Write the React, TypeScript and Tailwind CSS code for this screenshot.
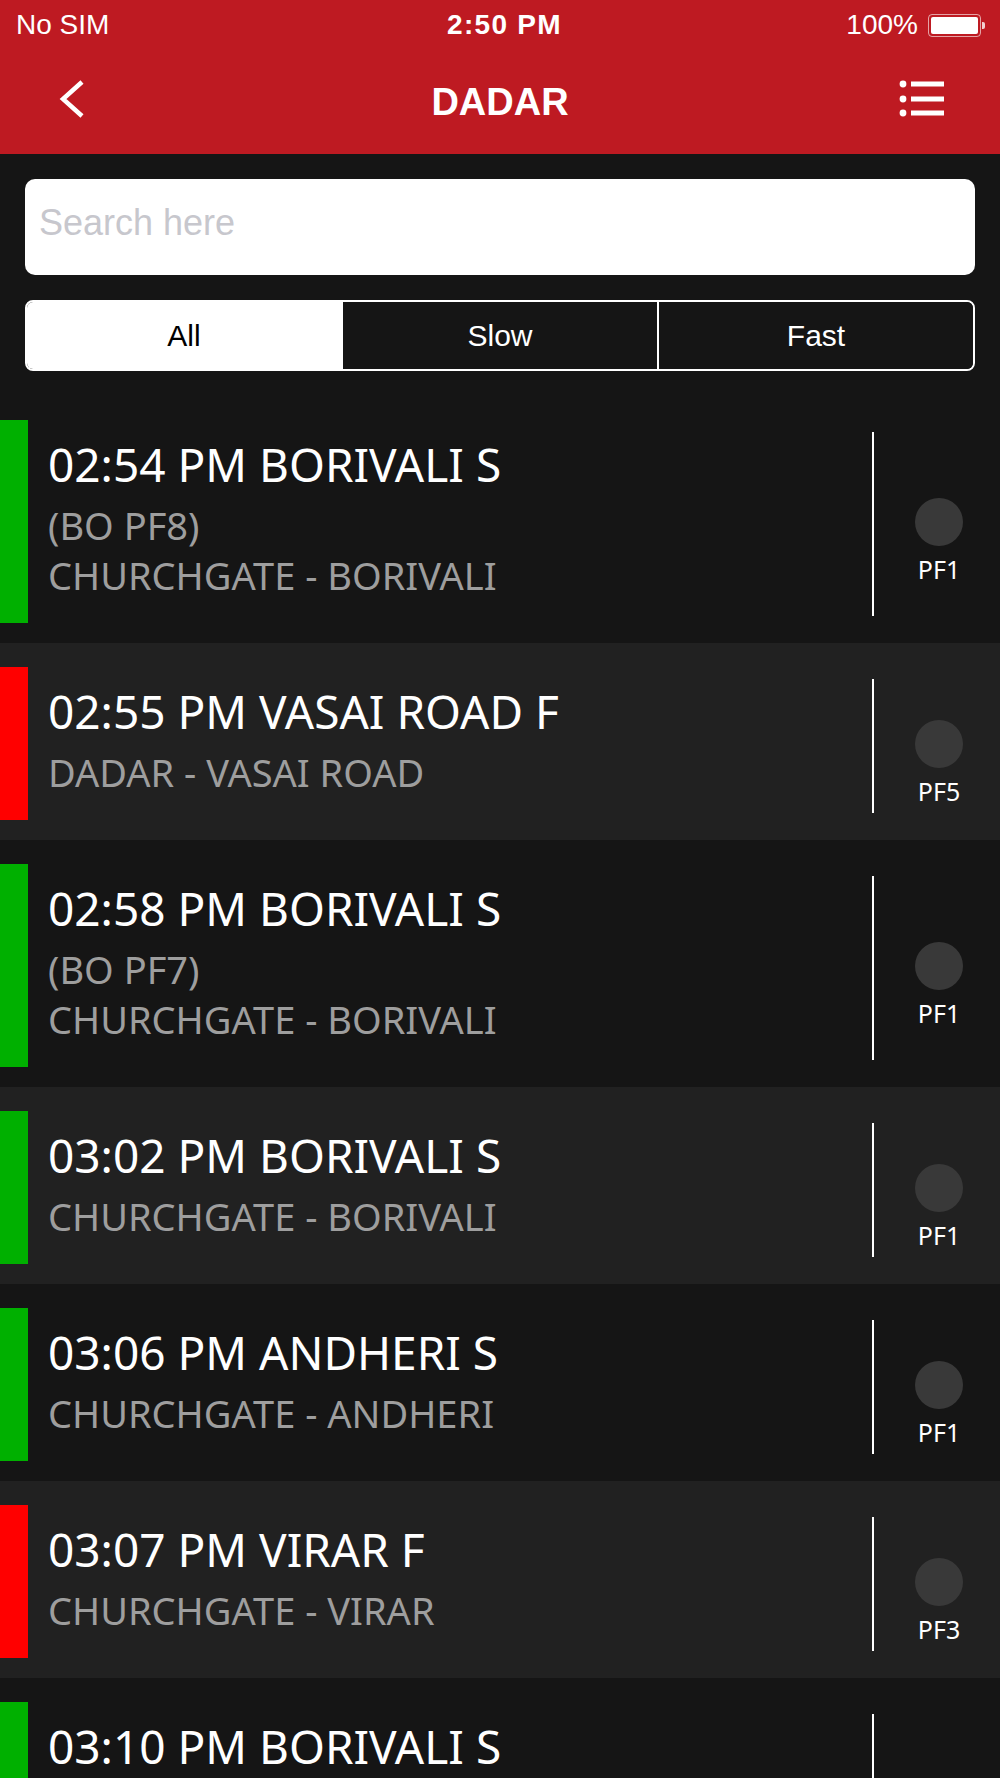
import { useState } from "react";

interface ITrain {
	time: string
	name: string
	fast: boolean
	lines: string[]
	platform: string
}

const trains: ITrain[] = [
	{ time: "02:54 PM", name: "BORIVALI S", fast: false, lines: ["(BO PF8)", "CHURCHGATE - BORIVALI"], platform: "PF1" },
	{ time: "02:55 PM", name: "VASAI ROAD F", fast: true, lines: ["DADAR - VASAI ROAD"], platform: "PF5" },
	{ time: "02:58 PM", name: "BORIVALI S", fast: false, lines: ["(BO PF7)", "CHURCHGATE - BORIVALI"], platform: "PF1" },
	{ time: "03:02 PM", name: "BORIVALI S", fast: false, lines: ["CHURCHGATE - BORIVALI"], platform: "PF1" },
	{ time: "03:06 PM", name: "ANDHERI S", fast: false, lines: ["CHURCHGATE - ANDHERI"], platform: "PF1" },
	{ time: "03:07 PM", name: "VIRAR F", fast: true, lines: ["CHURCHGATE - VIRAR"], platform: "PF3" },
	{ time: "03:10 PM", name: "BORIVALI S", fast: false, lines: ["(BO PF8)", "CHURCHGATE - BORIVALI"], platform: "PF1" },
];

const tabs = ["All", "Slow", "Fast"];

function StatusBar() {
	return (
		<div className="h-[50px] flex items-center justify-between pl-[16px] pr-[15px] text-white text-[28px] font-['Liberation_Sans',Arial,sans-serif]">
			<div className="w-[200px]">No SIM</div>
			<div className="font-bold tracking-[1.3px] pl-[8px]">2:50 PM</div>
			<div className="w-[200px] flex items-center justify-end">
				<span>100%</span>
				<div className="ml-[10px] flex items-center">
					<div className="w-[53px] h-[23px] rounded-[4px] border border-white/60 p-[2px]">
						<div className="w-full h-full rounded-[2px] bg-white" />
					</div>
					<div className="w-[3px] h-[7px] rounded-r-[2px] bg-white/80 ml-[1px]" />
				</div>
			</div>
		</div>
	)
}

function NavBar() {
	return (
		<div className="h-[104px] flex items-center font-['Liberation_Sans',Arial,sans-serif]">
			<div className="w-[200px] pl-[58px] flex items-center">
				<svg width="28" height="40" viewBox="0 0 28 40" className="mb-[6px]">
					<polyline points="24,3 5,20 24,37" fill="none" stroke="white" strokeWidth="4.5" />
				</svg>
			</div>
			<div className="flex-1 text-center text-white text-[38px] font-bold">DADAR</div>
			<div className="w-[200px] pr-[52px] flex items-center justify-end">
				<svg width="52" height="40" viewBox="0 0 52 40" className="mb-[6px]">
					<circle cx="7" cy="5" r="3.4" fill="white" />
					<circle cx="7" cy="20" r="3.4" fill="white" />
					<circle cx="7" cy="34" r="3.4" fill="white" />
					<rect x="15" y="2.5" width="33" height="5" fill="white" />
					<rect x="15" y="17.5" width="33" height="5" fill="white" />
					<rect x="15" y="31.5" width="33" height="5" fill="white" />
				</svg>
			</div>
		</div>
	)
}

function TrainRow({ train, index }: { train: ITrain, index: number }) {
	return (
		<div className={`flex pt-[24px] pb-[20px] ${index % 2 ? "bg-[#212121]" : "bg-[#151515]"}`}>
			<div className={`w-[28px] shrink-0 ${train.fast ? "bg-[#ff0000]" : "bg-[#00b000]"}`} />
			<div className="flex-1 min-w-0 pl-[20px] pt-[21px] pb-[23px] font-['Noto_Sans',sans-serif]">
				<div className="text-[46px] leading-[46px] text-white whitespace-nowrap">{train.time} {train.name}</div>
				<div className="mt-[13px]">
					{ train.lines.map((line) =>
						<div key={line} className="text-[38px] leading-[50px] text-[#9e9e9e] whitespace-nowrap">{line}</div>
					)}
				</div>
			</div>
			<div className="w-[2px] shrink-0 bg-white mt-[12px] mb-[7px]" />
			<div className="w-[126px] shrink-0 pl-[4px] flex flex-col items-center justify-center font-['Noto_Sans',sans-serif]">
				<div className="h-[40px]" />
				<div className="w-[48px] h-[48px] rounded-full bg-[#393939]" />
				<div className="mt-[6px] text-[25px] leading-[34px] text-white">{train.platform}</div>
			</div>
		</div>
	)
}

export default function App() {
	const [tab, setTab] = useState(0);

	return (
		<div className="w-[1000px] h-[1778px] overflow-hidden bg-[#151515]">
			<div className="bg-[#be1a22]">
				<StatusBar />
				<NavBar />
			</div>

			<div className="px-[25px] pt-[25px] pb-[25px] flex flex-col gap-[25px]">
				<input
					placeholder="Search here"
					className="h-[96px] w-full rounded-[10px] bg-white pl-[14px] pb-[8px] text-[36px] text-black outline-none placeholder:text-[#c7c7cd] font-['Liberation_Sans',Arial,sans-serif]"
				/>
				<div className="h-[71px] flex rounded-[8px] border-2 border-white overflow-hidden font-['Liberation_Sans',Arial,sans-serif] text-[30px]">
					{ tabs.map((t, i) =>
						<button
							key={t}
							onClick={() => setTab(i)}
							className={`flex-1 flex items-center justify-center ${i > 0 ? "border-l-2 border-white" : ""} ${tab === i ? "bg-white text-black" : "bg-[#151515] text-white"}`}
						>
							{t}
						</button>
					)}
				</div>
			</div>

			<div>
				{ trains.map((train, i) =>
					<TrainRow key={train.time} train={train} index={i} />
				)}
			</div>
		</div>
	)
}
